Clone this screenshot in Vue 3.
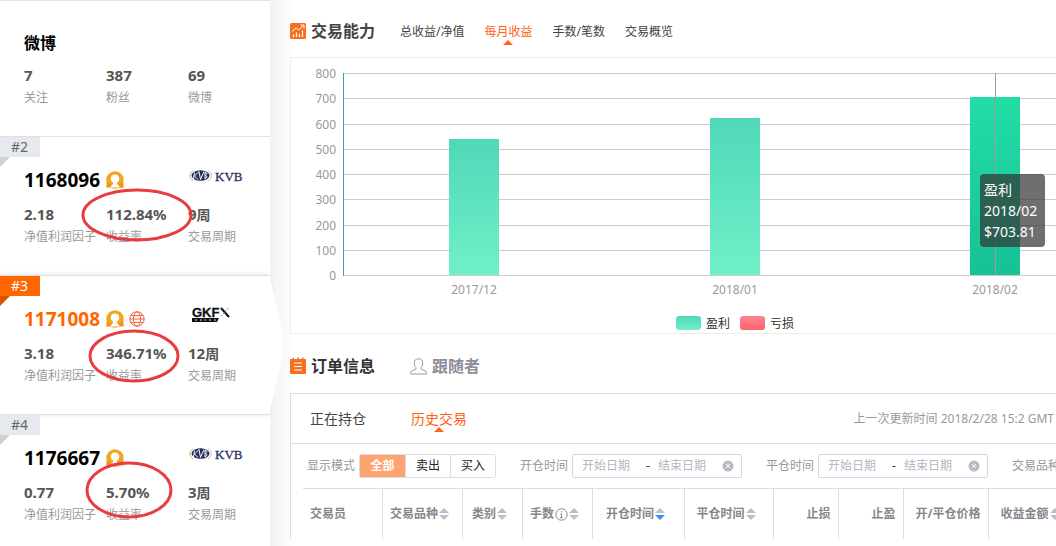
<script setup>
import { ref } from 'vue'

const profile = [
  { value: '7', label: '关注' },
  { value: '387', label: '粉丝' },
  { value: '69', label: '微博' }
]

const traders = [
  { rank: 2, id: '1168096', factor: '2.18', rate: '112.84%', weeks: '9', broker: 'kvb', mark: { cx: 137, cy: 79, rx: 54, ry: 25 } },
  { rank: 3, id: '1171008', factor: '3.18', rate: '346.71%', weeks: '12', broker: 'gkfx', active: true, mark: { cx: 134, cy: 81, rx: 44, ry: 25 } },
  { rank: 4, id: '1176667', factor: '0.77', rate: '5.70%', weeks: '3', broker: 'kvb', mark: { cx: 129, cy: 76, rx: 42, ry: 27 } }
]

const chartTabs = ['总收益/净值', '每月收益', '手数/笔数', '交易概览']
const chartTab = ref('每月收益')

const plot = { left: 53, right: 835, top: 15, bottom: 217, max: 800 }
const ticks = [800, 700, 600, 500, 400, 300, 200, 100, 0]
const yOf = v => Math.round(plot.bottom - (v / plot.max) * (plot.bottom - plot.top))
const months = [
  { label: '2017/12', value: 540 },
  { label: '2018/01', value: 621 },
  { label: '2018/02', value: 703.81 }
]
const step = (plot.right - plot.left) / months.length
const xOf = i => Math.floor(plot.left + step * (i + 0.5))

const orderTabs = ['正在持仓', '历史交易']
const orderTab = ref('历史交易')
const modes = ['全部', '卖出', '买入']
const mode = ref('全部')
const ranges = [
  { id: 'open', label: '开仓时间' },
  { id: 'close', label: '平仓时间' }
]

const columns = [
  { name: '交易员', width: '79px', align: 'left' },
  { name: '交易品种', width: '80px', sort: 'none' },
  { name: '类别', width: '60px', sort: 'none' },
  { name: '手数', width: '70px', sort: 'none', info: true },
  { name: '开仓时间', width: '92px', sort: 'desc' },
  { name: '平仓时间', width: '89px', sort: 'none' },
  { name: '止损', width: '65px', align: 'right' },
  { name: '止盈', width: '65px', align: 'right' },
  { name: '开/平仓价格', width: '85px', align: 'right' },
  { name: '收益金额', width: 'auto', align: 'amount', sort: 'none' }
]
</script>

<template>
  <div class="page">
    <aside class="side">
      <section class="card profile">
        <h2 class="profile-name">微博</h2>
        <dl class="stats">
          <div v-for="s in profile" :key="s.label" class="stat">
            <dd>{{ s.value }}</dd>
            <dt>{{ s.label }}</dt>
          </div>
        </dl>
      </section>

      <section v-for="t in traders" :key="t.id" class="card trader" :class="{ active: t.active }">
        <svg v-if="t.active" class="bulge" width="15" height="139" viewBox="0 0 15 139">
          <path d="M0 0C3 24 13 50 14 70C13 91 3 114 0 139Z" fill="#fff" />
        </svg>
        <span class="rank">#{{ t.rank }}</span>
        <div class="head">
          <h2 class="trader-id">{{ t.id }}</h2>
          <svg class="medal" width="18" height="18" viewBox="0 0 18 18">
            <circle cx="9" cy="9" r="8.7" fill="#f4a51e" />
            <path d="M0.8 11L0.2 16.500H17.800L17.200 11L14 13.500H4Z" fill="#e8960f" />
            <path d="M9 3.500A4.200 4.200 0 0 0 7 11.400L7 13L4.500 15.500L5 16.500H13L13.500 15.500L11 13L11 11.400A4.200 4.200 0 0 0 9 3.500Z" fill="#fff" />
          </svg>
          <svg v-if="t.active" class="globe" width="16" height="16" viewBox="0 0 16 16" fill="none" stroke="#f0643c" stroke-width="1">
            <circle cx="8" cy="8" r="7.2" />
            <ellipse cx="8" cy="8" rx="3.6" ry="7.2" />
            <path d="M2 4.600H14M1 8H15M2 11.400H14" />
          </svg>
          <svg v-if="t.broker === 'kvb'" class="broker" width="56" height="18" viewBox="0 0 56 18">
            <path d="M5 4.500Q-1.500 9.500 5 15" fill="none" stroke="#e0b465" />
            <path d="M20 4.500Q27 9.500 20 15" fill="none" stroke="#b9bccb" />
            <ellipse cx="12.500" cy="9.500" rx="9" ry="5.200" fill="#262c5c" />
            <path d="M6.500 6.500L5.500 13M11 5.500L6.500 10L10 13.500M11 5.500L12.500 13.500L16 5.500M17 6V13M17 6Q20.500 7 17.500 9.300Q20.500 10.500 17 13" fill="none" stroke="#fff" stroke-width="1" />
            <text x="27" y="15" font-family="Liberation Serif, serif" font-size="13" fill="#26305c" stroke="#26305c" stroke-width="0.3">KVB</text>
          </svg>
          <svg v-else class="broker" width="56" height="18" viewBox="0 0 56 18">
            <text x="4" y="12" font-family="Liberation Sans, sans-serif" font-weight="bold" font-size="13" fill="#111" stroke="#111" stroke-width="0.3">GKF</text>
            <path d="M33 3L41 12" stroke="#111" stroke-width="2" />
            <path d="M40.500 3L33 11.500" stroke="#888" stroke-width="1" stroke-dasharray="2 1" />
            <path d="M4 13H31L29 17H4Z" fill="#111" />
            <path d="M7 15H9M12 15H14M16.500 15H18M21 15H23M26 15H28" stroke="#ddd" stroke-width="1" />
          </svg>
        </div>
        <dl class="stats">
          <div class="stat"><dd>{{ t.factor }}</dd><dt>净值利润因子</dt></div>
          <div class="stat"><dd>{{ t.rate }}</dd><dt>收益率</dt></div>
          <div class="stat"><dd>{{ t.weeks }}<span class="unit">周</span></dd><dt>交易周期</dt></div>
        </dl>
        <svg class="mark" width="270" height="139" viewBox="0 0 270 139">
          <ellipse :cx="t.mark.cx" :cy="t.mark.cy" :rx="t.mark.rx" :ry="t.mark.ry" fill="none" stroke="#e93c3e" stroke-width="3" />
        </svg>
      </section>
    </aside>

    <main class="main">
      <div class="content">
        <header class="bar">
          <svg class="bar-icon" width="16" height="16" viewBox="0 0 16 16">
            <rect x="0" y="0" width="16" height="16" rx="1.500" fill="#f8701e" />
            <path d="M2 8.500L6 5L8.500 7L13.500 2.500M10.500 2H14V5.500" fill="none" stroke="#fff" stroke-width="1" />
            <path d="M3.500 14V11.500M6.500 14V9.500M9.500 14V11M12.500 14V7.500" stroke="#fff" stroke-width="1.200" />
          </svg>
          <h1>交易能力</h1>
          <nav class="tabs">
            <button v-for="t in chartTabs" :key="t" type="button" :class="{ on: t === chartTab }" @click="chartTab = t">{{ t }}</button>
          </nav>
        </header>

        <section class="chart">
          <svg width="888" height="275" viewBox="0 0 888 275" font-family="Noto Sans, Noto Sans CJK SC, sans-serif" font-size="12">
            <defs>
              <linearGradient id="gain" x1="0" y1="0" x2="0" y2="1">
                <stop offset="0" stop-color="#50d8b8" /><stop offset="1" stop-color="#70f0c8" />
              </linearGradient>
              <linearGradient id="gainHover" x1="0" y1="0" x2="0" y2="1">
                <stop offset="0" stop-color="#22dda5" /><stop offset="1" stop-color="#16c196" />
              </linearGradient>
              <linearGradient id="loss" x1="0" y1="0" x2="0" y2="1">
                <stop offset="0" stop-color="#ff8593" /><stop offset="1" stop-color="#ff6268" />
              </linearGradient>
            </defs>
            <g v-for="v in ticks" :key="v">
              <rect :x="plot.left" :y="yOf(v)" :width="plot.right - plot.left" height="1" fill="#ccc" />
              <text x="45" :y="yOf(v) + 5" text-anchor="end" fill="#999">{{ v }}</text>
            </g>
            <rect :x="plot.left - 1" :y="plot.top" width="1" :height="plot.bottom - plot.top + 1" fill="#3d9db0" />
            <g v-for="(m, i) in months" :key="m.label">
              <rect :x="xOf(i) - 25" :y="yOf(m.value)" width="50" :height="plot.bottom - yOf(m.value)" :fill="i === 2 ? 'url(#gainHover)' : 'url(#gain)'" />
              <text :x="xOf(i)" y="236" text-anchor="middle" fill="#999">{{ m.label }}</text>
            </g>
            <rect :x="xOf(2)" :y="plot.top" width="1" :height="plot.bottom - plot.top" fill="#a39c9e" />
            <rect x="385" y="258" width="25" height="14" rx="3" fill="url(#gain)" />
            <text x="415" y="270" fill="#333">盈利</text>
            <rect x="449" y="258" width="25" height="14" rx="3" fill="url(#loss)" />
            <text x="479" y="270" fill="#333">亏损</text>
          </svg>
          <div class="tip">盈利<br>2018/02<br>$703.81</div>
        </section>

        <header class="bar orders-bar">
          <svg class="bar-icon" width="16" height="18" viewBox="0 0 16 18">
            <path d="M0 2H2.500V0.500H4V2H7.300V0.500H8.800V2H12V0.500H13.500V2H16V16Q16 17 15 17H1Q0 17 0 16Z" fill="#f8701e" />
            <path d="M4 6H12M4 9.500H12M4 13H12" stroke="#fff" stroke-width="1.200" />
          </svg>
          <h1 class="dark">订单信息</h1>
          <button type="button" class="followers">
            <svg width="17" height="17" viewBox="0 0 17 17" fill="none" stroke="#9a9a9e" stroke-width="1">
              <path d="M6 9.500C4.500 8 4.300 6.500 4.300 4.800C4.300 2 6 0.800 8.500 0.800C11 0.800 12.700 2 12.700 4.800C12.700 6.500 12.500 8 11 9.500V11L15.500 13Q16.300 13.800 16.300 16H0.700Q0.700 13.800 1.500 13L6 11Z" />
            </svg>
            跟随者
          </button>
        </header>

        <section class="orders">
          <div class="order-tabs">
            <nav class="tabs">
              <button v-for="t in orderTabs" :key="t" type="button" :class="{ on: t === orderTab }" @click="orderTab = t">{{ t }}</button>
            </nav>
            <p class="updated">上一次更新时间 2018/2/28 15:2 GMT</p>
          </div>

          <form class="filters" @submit.prevent>
            <div class="field">
              <span>显示模式</span>
              <div class="modes">
                <button v-for="m in modes" :key="m" type="button" :class="{ on: m === mode }" @click="mode = m">{{ m }}</button>
              </div>
            </div>
            <div v-for="r in ranges" :key="r.id" class="field">
              <label :for="r.id">{{ r.label }}</label>
              <div class="range">
                <input :id="r.id" type="text" placeholder="开始日期">
                <span class="dash">-</span>
                <input type="text" placeholder="结束日期" :aria-label="r.label + '结束日期'">
                <button type="button" class="clear" aria-label="清除">
                  <svg width="12" height="12" viewBox="0 0 12 12">
                    <circle cx="6" cy="6" r="5.500" fill="#b9bcc6" />
                    <path d="M4 4L8 8M8 4L4 8" stroke="#fff" stroke-width="1" />
                  </svg>
                </button>
              </div>
            </div>
            <div class="field"><span>交易品种</span></div>
          </form>

          <table>
            <colgroup>
              <col v-for="c in columns" :key="c.name" :style="{ width: c.width }">
            </colgroup>
            <thead>
              <tr>
                <th v-for="c in columns" :key="c.name" scope="col" :class="c.align">
                  <button v-if="c.sort" type="button" class="sort">
                    {{ c.name }}
                    <svg v-if="c.info" class="info" width="13" height="13" viewBox="0 0 13 13" fill="none" stroke="#8a8a8e">
                      <circle cx="6.500" cy="6.500" r="5.700" />
                      <path d="M6.500 3V4.300M5.300 5.800H6.500V9.500M5 9.700H8" />
                    </svg>
                    <svg width="10" height="12" viewBox="0 0 10 12">
                      <path d="M5 0L10 5H0Z" fill="#bcbfc8" />
                      <path d="M0 7H10L5 12Z" :fill="c.sort === 'desc' ? '#3d8ff0' : '#bcbfc8'" />
                    </svg>
                  </button>
                  <template v-else>{{ c.name }}</template>
                </th>
              </tr>
            </thead>
          </table>
        </section>
      </div>
    </main>
  </div>
</template>

<style>
body {
  margin: 0;
  overflow: hidden;
  background: #fff;
}
</style>

<style scoped>
.page {
  display: flex;
  min-height: 100vh;
  font: 12px/18px "Noto Sans", "Noto Sans CJK SC", sans-serif;
  color: #444;
}
h1, h2, p, dl, dd, dt { margin: 0; }
button {
  padding: 0;
  border: 0;
  background: none;
  font: inherit;
  color: inherit;
  cursor: pointer;
}

.side {
  flex: 0 0 270px;
  background: #fff;
}
.card {
  position: relative;
  box-sizing: border-box;
  height: 139px;
  padding: 31px 0 0 24px;
  border-top: 1px solid #e2e2e4;
}
.profile {
  height: 136px;
  padding-top: 30px;
}
.profile-name {
  font-size: 16px;
  line-height: 24px;
  color: #000;
}
.profile .stats { margin-top: 10px; }
.trader.active {
  box-shadow: 0 0 5px #ddd;
  clip-path: inset(-6px -20px -6px 0);
}
.bulge {
  position: absolute;
  top: -1px;
  left: 270px;
}
.rank {
  position: absolute;
  top: 0;
  left: 0;
  box-sizing: border-box;
  width: 40px;
  padding-left: 11px;
  background: #e6e9ee;
  font-size: 14px;
  line-height: 20px;
  color: #666;
}
.rank::after {
  content: "";
  position: absolute;
  top: 20px;
  left: 0;
  border-top: 10px solid #cdd1d6;
  border-right: 10px solid transparent;
}
.active .rank {
  background: #ff6600;
  color: #fff;
}
.active .rank::after { border-top-color: #dc5200; }
.head {
  display: grid;
  grid-template-columns: 77px 18px 16px 1fr;
  grid-template-rows: 24px;
  column-gap: 5px;
  align-items: center;
}
.trader-id {
  font-size: 19px;
  line-height: 24px;
  color: #000;
}
.active .trader-id { color: #ff6600; }
.broker {
  grid-column: 4;
  align-self: start;
  justify-self: end;
  margin: -2px 26px 0 0;
}
.trader .stats { margin-top: 12px; }
.stats {
  display: grid;
  grid-template-columns: 82px 82px 82px;
}
.stat {
  display: flex;
  flex-direction: column;
  gap: 4px;
  white-space: nowrap;
}
.stat dd {
  font-size: 15px;
  font-weight: bold;
  line-height: 20px;
  color: #555;
}
.unit {
  font-size: 14px;
  line-height: 1;
}
.stat dt { color: #999; }
.mark {
  position: absolute;
  top: -1px;
  left: 0;
  pointer-events: none;
}

.main {
  flex: 1;
  min-width: 0;
  padding-left: 20px;
  overflow: hidden;
  background: linear-gradient(to right, #f3f3f3, #f8f8f8 14px, #fff 22px);
}
.content { min-width: 890px; }
.bar {
  display: flex;
  align-items: center;
  box-sizing: border-box;
  height: 57px;
  padding-top: 5px;
}
.orders-bar { height: 59px; }
.bar-icon { margin-right: 5px; }
.bar h1 {
  font-size: 16px;
  line-height: 24px;
  color: #444;
}
.bar h1.dark { color: #333; }
.tabs { display: flex; }
.bar .tabs {
  gap: 20px;
  margin-left: 25px;
  padding-top: 1px;
}
.tabs button { position: relative; }
.tabs .on { color: #ff6216; }
.tabs .on::after {
  content: "";
  position: absolute;
  top: 100%;
  left: 50%;
  margin: -1px 0 0 -5px;
  border: 5px solid transparent;
  border-top: 0;
  border-bottom-color: #ff6216;
}
.followers {
  display: flex;
  align-items: center;
  gap: 5px;
  margin-left: 35px;
  font-size: 16px;
  font-weight: bold;
  line-height: 24px;
  color: #8c8e98;
}

.chart {
  position: relative;
  border: 1px solid #eee;
}
.chart svg { display: block; }
.tip {
  position: absolute;
  top: 116px;
  left: 689px;
  box-sizing: border-box;
  width: 65px;
  padding: 5px 4px;
  border-radius: 4px;
  background: rgba(50, 50, 50, 0.7);
  font-size: 14px;
  line-height: 21px;
  color: #fff;
}

.orders {
  border: 1px solid #ddd;
  border-bottom: 0;
}
.order-tabs {
  display: flex;
  align-items: center;
  justify-content: space-between;
  height: 49px;
  padding: 0 125px 0 19px;
  border-bottom: 1px solid #ddd;
}
.order-tabs .tabs {
  gap: 45px;
  font-size: 14px;
}
.updated { color: #999; }
.filters {
  display: flex;
  align-items: center;
  gap: 24px;
  height: 44px;
  padding-left: 16px;
  color: #999;
}
.field {
  display: flex;
  align-items: center;
  gap: 4px;
}
.modes {
  display: flex;
  border: 1px solid #dcdde2;
  border-radius: 2px;
}
.modes button {
  width: 45px;
  line-height: 22px;
  color: #222;
}
.modes button + button { border-left: 1px solid #dcdde2; }
.modes .on {
  background: #ffa46e;
  font-weight: bold;
  color: #fff;
}
.range {
  display: flex;
  align-items: center;
  box-sizing: border-box;
  width: 170px;
  height: 24px;
  padding: 0 7px 0 9px;
  border: 1px solid #d5d7df;
  border-radius: 2px;
}
.range input {
  flex: 1;
  min-width: 0;
  padding: 0;
  border: 0;
  outline: 0;
  background: none;
  font: inherit;
  color: #444;
}
.range input::placeholder { color: #b3b7c5; }
.dash {
  width: 12px;
  color: #333;
}
.clear { display: flex; }

table {
  width: calc(100% - 12px);
  margin-left: 12px;
  border-collapse: collapse;
  table-layout: fixed;
}
th {
  box-sizing: border-box;
  height: 50px;
  padding: 0 5px 0 0;
  border-top: 1px solid #ddd;
  border-right: 1px solid #ddd;
  text-align: center;
  white-space: nowrap;
  color: #85878c;
}
th.left {
  padding-left: 7px;
  text-align: left;
}
th.right {
  padding-right: 7px;
  text-align: right;
}
th.amount {
  padding-left: 12px;
  text-align: left;
}
.sort {
  display: inline-flex;
  align-items: center;
  gap: 1px;
  vertical-align: middle;
}
</style>
